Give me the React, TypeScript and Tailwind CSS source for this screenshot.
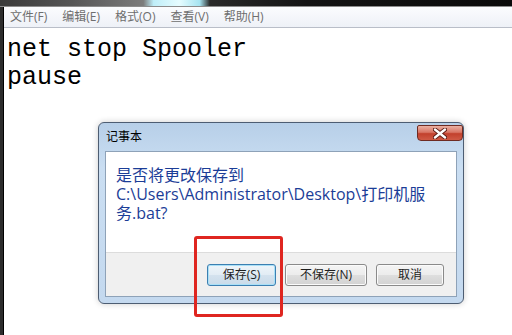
const uiFont = "font-['Open_Sans','Noto_Sans_CJK_SC',sans-serif]";

function MenuBar() {
  const items = ["文件(F)", "编辑(E)", "格式(O)", "查看(V)", "帮助(H)"];
  return (
    <div className="h-[21px] shrink-0 flex items-center gap-[15px] pl-[6px] bg-[linear-gradient(180deg,#fbfcfe,#eef1f7)] border-b border-[#b9bec8]">
      {items.map((t) => (
        <span key={t} className={`${uiFont} text-[12px] leading-none text-[#6e6e6e]`}>
          {t}
        </span>
      ))}
    </div>
  );
}

interface ButtonProps {
  text: string;
  width: string;
  focused?: boolean;
}

function DlgButton({ text, width, focused }: ButtonProps) {
  const look = focused
    ? "border-[#3c7fb1] bg-[linear-gradient(180deg,#eef5fa_0%,#e2ecf4_50%,#d4e2ee_51%,#c9dbe9_100%)] shadow-[inset_0_0_0_1px_#a9e0f7]"
    : "border-[#8a8a8a] bg-[linear-gradient(180deg,#f4f4f4_0%,#ececec_50%,#dedede_51%,#d2d2d2_100%)] shadow-[inset_0_0_0_1px_#fbfbfb]";
  return (
    <div
      className={`${width} h-[22px] rounded-[3px] border ${look} flex items-center justify-center ${uiFont} text-[12px] text-[#1e1e1e]`}
    >
      {text}
    </div>
  );
}

function CloseButton() {
  return (
    <div className="absolute left-[312px] top-[2px] w-[46px] h-[16px] rounded-b-[4px] rounded-t-[2px] border border-[#6e2b22] bg-[linear-gradient(180deg,#eab0a2_0%,#d97564_45%,#c2402c_55%,#cf5a45_100%)] flex items-center justify-center">
      <svg width="14" height="11" viewBox="0 0 14 11">
        <path
          d="M2 1.5 L12 9.5 M12 1.5 L2 9.5"
          stroke="#5a1a12"
          strokeWidth="4.2"
          strokeLinecap="round"
        />
        <path
          d="M2 1.5 L12 9.5 M12 1.5 L2 9.5"
          stroke="#ffffff"
          strokeWidth="2.4"
          strokeLinecap="round"
        />
      </svg>
    </div>
  );
}

function SaveDialog() {
  return (
    <div className="absolute left-[98px] top-[122px] w-[366px] h-[182px] rounded-[6px] border border-[#4d5d72] bg-[linear-gradient(180deg,#b7cfe8_0%,#cadef2_25%,#c4d9ef_100%)] shadow-[0_0_6px_rgba(0,0,0,0.2)] flex flex-col px-[6px] pb-[6px]">
      <div className="relative h-[28px] shrink-0 flex items-center pl-[1px]">
        <span className={`${uiFont} text-[12px] text-black`}>记事本</span>
        <CloseButton />
      </div>
      <div className="flex-1 flex flex-col border border-[#8ea2b8] bg-white">
        <div className={`flex-1 pl-[10px] pt-[14px] ${uiFont} text-[16px] leading-[19px] text-[#1b3d97]`}>
          是否将更改保存到
          <br />
          {"C:\\Users\\Administrator\\Desktop\\打印机服"}
          <br />
          务.bat?
        </div>
        <div className="h-[44px] shrink-0 bg-[#f0f0f0] border-t border-[#dcdcdc] flex justify-end items-start pt-[11px] pr-[12px] gap-[9px]">
          <DlgButton text="保存(S)" width="w-[69px]" focused />
          <DlgButton text="不保存(N)" width="w-[82px]" />
          <DlgButton text="取消" width="w-[68px]" />
        </div>
      </div>
    </div>
  );
}

export default function App() {
  return (
    <div className="relative w-[512px] h-[335px] overflow-hidden bg-white flex flex-col">
      <div className="h-[7px] shrink-0 bg-[linear-gradient(90deg,#3a3a3a_0%,#555_14%,#7c7c7c_28%,#bfeef8_30%,#e6fcff_35%,#a6e4f1_39%,#2a2a2a_41%,#141414_60%,#0a0a0a_100%)] border-b border-[#8c8c8c]" />
      <div className="flex flex-1 min-h-0">
        <div className="w-[4px] shrink-0 bg-[#2c2c2c] border-r border-black" />
        <div className="flex-1 flex flex-col">
          <MenuBar />
          <pre className="pl-[3px] pt-[8px] font-['Liberation_Mono',monospace] text-[25px] leading-[28px] text-black">
            {"net stop Spooler\npause"}
          </pre>
        </div>
      </div>
      <SaveDialog />
      <div className="absolute left-[194px] top-[236px] w-[89px] h-[81px] rounded-[3px] border-[3px] border-[#df2620]" />
    </div>
  );
}
